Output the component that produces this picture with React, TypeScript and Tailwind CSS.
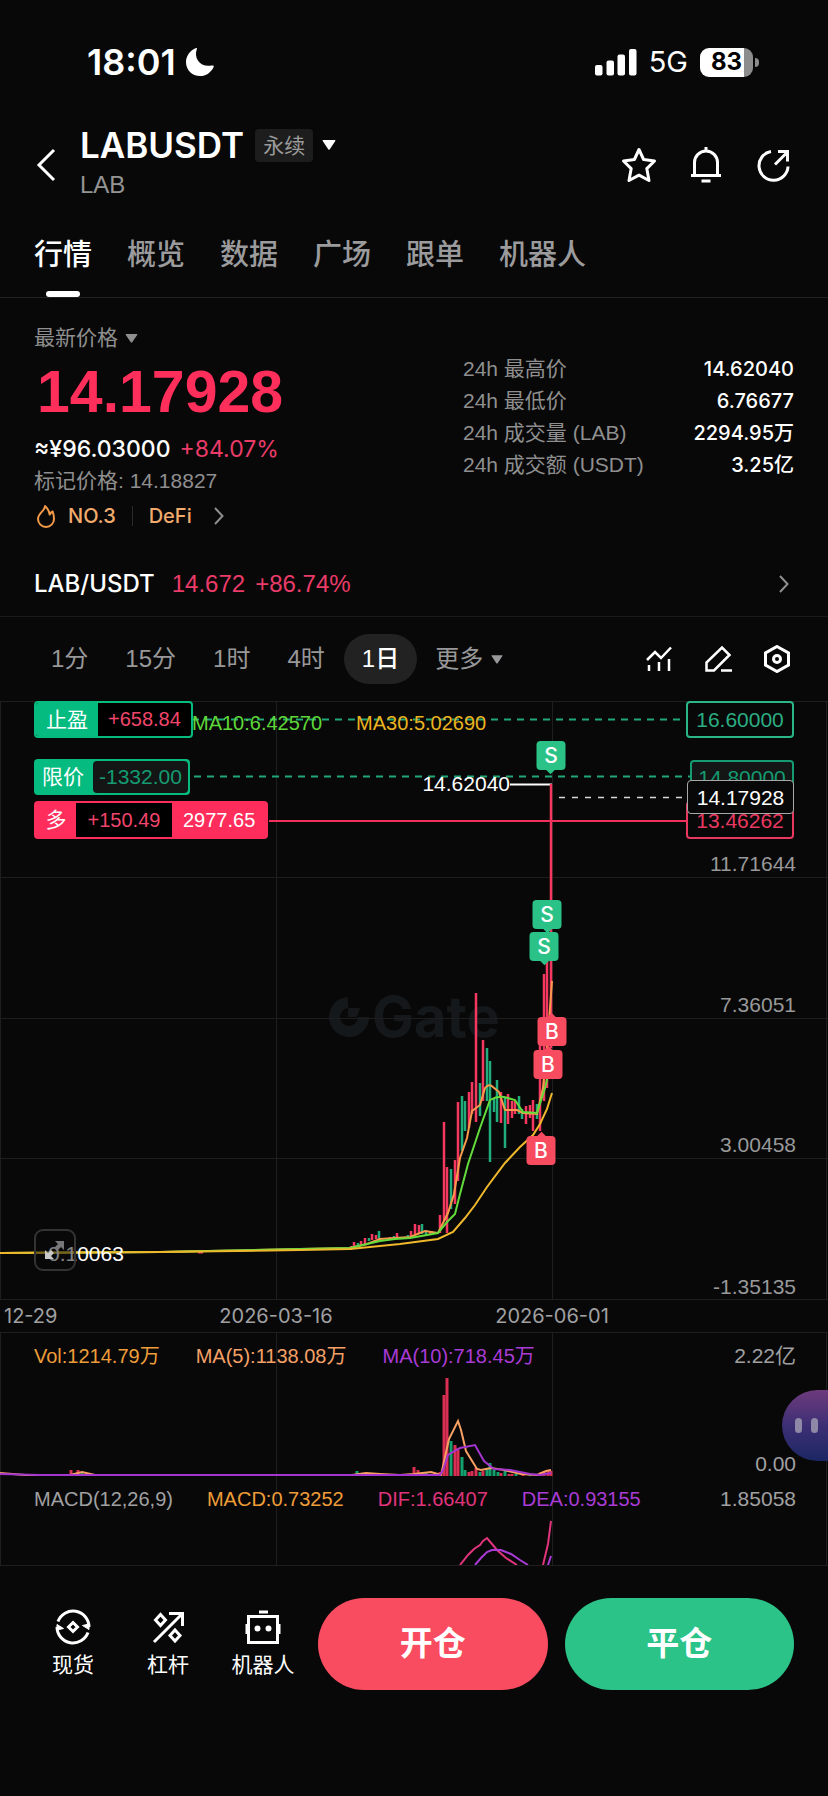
import { useState } from 'react'
import type { ReactNode } from 'react'
import clsx from 'clsx'

type Side = 'buy' | 'sell'

// [x, top, bottom, direction]
type Candle = [number, number, number, 'up' | 'down']

const RED = '#f5385f'
const GREEN = '#1fae7b'

const TABS = ['行情', '概览', '数据', '广场', '跟单', '机器人']
const INTERVALS = ['1分', '15分', '1时', '4时', '1日']

const STATS = [
  { label: '24h 最高价', value: '14.62040' },
  { label: '24h 最低价', value: '6.76677' },
  { label: '24h 成交量 (LAB)', value: '2294.95万' },
  { label: '24h 成交额 (USDT)', value: '3.25亿' },
]

const CANDLES: Candle[] = [
  [351, 545, 549, 'up'],
  [354, 541, 547, 'up'],
  [358, 542, 546, 'down'],
  [361, 540, 544, 'up'],
  [365, 537, 543, 'up'],
  [369, 537, 540, 'down'],
  [372, 533, 539, 'up'],
  [376, 534, 538, 'up'],
  [379, 530, 539, 'down'],
  [390, 536, 539, 'up'],
  [394, 535, 538, 'down'],
  [397, 532, 538, 'up'],
  [408, 534, 538, 'down'],
  [411, 530, 536, 'up'],
  [415, 523, 533, 'up'],
  [419, 524, 533, 'up'],
  [422, 523, 533, 'down'],
  [426, 529, 535, 'down'],
  [430, 531, 534, 'up'],
  [433, 531, 533, 'down'],
  [440, 514, 532, 'up'],
  [444, 421, 520, 'up'],
  [447, 466, 532, 'up'],
  [451, 468, 508, 'down'],
  [455, 459, 503, 'up'],
  [458, 401, 480, 'up'],
  [462, 395, 450, 'down'],
  [465, 400, 430, 'down'],
  [469, 391, 427, 'up'],
  [472, 381, 413, 'up'],
  [476, 292, 421, 'up'],
  [480, 382, 415, 'down'],
  [483, 339, 400, 'up'],
  [487, 347, 400, 'down'],
  [490, 360, 461, 'down'],
  [494, 397, 411, 'down'],
  [497, 379, 421, 'down'],
  [501, 391, 422, 'up'],
  [505, 397, 447, 'down'],
  [508, 393, 423, 'up'],
  [512, 400, 417, 'up'],
  [515, 400, 413, 'up'],
  [519, 395, 413, 'down'],
  [522, 408, 418, 'down'],
  [526, 405, 423, 'up'],
  [530, 404, 417, 'up'],
  [533, 399, 430, 'up'],
  [537, 403, 418, 'down'],
  [540, 343, 430, 'up'],
  [544, 273, 400, 'up'],
  [547, 260, 387, 'up'],
  [551, 83, 347, 'up'],
]

const VOLUME_BARS: Candle[] = [
  [71, 137, 143, 'up'],
  [78, 137, 143, 'up'],
  [82, 140, 143, 'down'],
  [88, 140, 143, 'up'],
  [357, 138, 143, 'down'],
  [361, 140, 143, 'up'],
  [372, 140, 143, 'up'],
  [414, 134, 143, 'up'],
  [418, 137, 143, 'up'],
  [422, 139, 143, 'down'],
  [426, 140, 143, 'down'],
  [440, 139, 143, 'up'],
  [444, 62, 143, 'up'],
  [447, 45, 143, 'up'],
  [451, 108, 143, 'down'],
  [455, 112, 143, 'up'],
  [458, 115, 143, 'up'],
  [462, 124, 143, 'down'],
  [465, 137, 143, 'down'],
  [469, 139, 143, 'up'],
  [472, 138, 143, 'up'],
  [476, 135, 143, 'up'],
  [480, 139, 143, 'down'],
  [483, 138, 143, 'up'],
  [487, 136, 143, 'down'],
  [490, 130, 143, 'down'],
  [494, 137, 143, 'down'],
  [498, 139, 143, 'down'],
  [501, 140, 143, 'up'],
  [505, 138, 143, 'down'],
  [509, 141, 143, 'up'],
  [512, 141, 143, 'up'],
  [516, 141, 143, 'down'],
  [523, 142, 143, 'up'],
  [530, 142, 143, 'down'],
  [537, 141, 143, 'up'],
  [541, 139, 143, 'up'],
  [544, 138, 143, 'up'],
  [548, 137, 143, 'up'],
  [551, 138, 143, 'up'],
]

const MARKERS: { side: Side; x: number; y: number }[] = [
  { side: 'sell', x: 551, y: 40 },
  { side: 'sell', x: 547, y: 199 },
  { side: 'sell', x: 544, y: 231 },
  { side: 'buy', x: 552, y: 316 },
  { side: 'buy', x: 548, y: 349 },
  { side: 'buy', x: 541, y: 435 },
]

function Caret({ className }: { className: string }) {
  return (
    <svg viewBox="0 0 14 10" className={className} fill="currentColor" aria-hidden="true">
      <path d="M1.2 0h11.6q1.2 0 .5 1L7.8 9.3q-.8 1-1.6 0L.7 1Q0 0 1.2 0Z" />
    </svg>
  )
}

function Chevron({ className }: { className: string }) {
  return (
    <svg viewBox="0 0 10 18" className={className} fill="none" stroke="currentColor" strokeWidth="2" aria-hidden="true">
      <path d="m1 1 7.5 8L1 17" />
    </svg>
  )
}

function StatusBar() {
  return (
    <div className="flex h-[124px] items-center justify-between pr-[69px] pl-[87px] font-['Inter',sans-serif]">
      <div className="flex items-center gap-[9px]">
        <span className="text-[36px] leading-10 font-semibold">18:01</span>
        <svg viewBox="0 0 30 30" className="h-[30px] w-[30px]" fill="currentColor" aria-hidden="true">
          <path d="M10.5 1.2c1.2-.5 1.7 0 1.3 1C8.6 11 15 20.5 26.5 18.6c2-.4 2.7.2 2 1.600C26 25.500 21 29 15 29 7 29 1 23 1 15 1 9 5 3.500 10.500 1.200Z" />
        </svg>
      </div>
      <div className="flex items-center">
        <svg viewBox="0 0 42 27" className="h-[27px] w-[42px]" fill="currentColor" aria-hidden="true">
          <rect x="0" y="16" width="7.500" height="10.500" rx="2" />
          <rect x="11.500" y="11.500" width="7.500" height="15" rx="2" />
          <rect x="22.500" y="5.500" width="7.500" height="21" rx="2" />
          <rect x="34" y="0" width="7.500" height="26.500" rx="2" />
        </svg>
        <span className="ml-[12px] text-[29px] leading-10">5G</span>
        <div className="ml-[12px] flex items-center gap-[2px]">
          <span className="flex h-[29px] w-[53px] items-center justify-center rounded-[9px] bg-linear-to-r from-white from-83% to-[#8c8c8c] to-83% text-[24px] leading-7 font-bold text-black">
            83
          </span>
          <span className="h-[9px] w-[4px] rounded-r-full bg-[#8c8c8c]" />
        </div>
      </div>
    </div>
  )
}

function IconButton({ label, children }: { label: string; children: ReactNode }) {
  return (
    <button type="button" aria-label={label} className="flex h-10 w-10 items-center justify-center">
      {children}
    </button>
  )
}

function PairHeader() {
  return (
    <header className="flex h-[82px] items-center pr-[35px] pl-[36px]">
      <button type="button" aria-label="返回" className="mr-[24px]">
        <svg viewBox="0 0 20 34" className="h-[34px] w-[20px]" fill="none" stroke="currentColor" strokeWidth="3" aria-hidden="true">
          <path d="M18 2 3 17l15 15" />
        </svg>
      </button>
      <div className="flex-1">
        <button type="button" className="flex items-center">
          <span className="font-['Inter',sans-serif] text-[35px] leading-10 font-semibold">LABUSDT</span>
          <span className="ml-[11px] rounded-[4px] bg-[#1d1d1d] px-[8px] text-[21px] leading-[33px] text-[#9a9a9a]">
            永续
          </span>
          <Caret className="ml-[9px] h-[10px] w-[14px]" />
        </button>
        <div className="text-[24px] leading-10 text-[#949494]">LAB</div>
      </div>
      <div className="flex gap-[27px]">
        <IconButton label="自选">
          <svg viewBox="0 0 36 36" className="h-9 w-9" fill="none" stroke="currentColor" strokeWidth="3" strokeLinejoin="round" aria-hidden="true">
            <path d="m18 2.500 4.600 10L33.500 14l-7.700 7.600L28 33.500l-10-5.300-10 5.300 2.200-11.900L2.500 14l10.900-1.500Z" />
          </svg>
        </IconButton>
        <IconButton label="提醒">
          <svg viewBox="0 0 36 36" className="h-9 w-9" fill="none" stroke="currentColor" strokeWidth="3" aria-hidden="true">
            <path d="M18 0v4M6.500 28.500V15.500a11.500 11.500 0 0 1 23 0v13M3 28.500h30M13.500 34h9" />
          </svg>
        </IconButton>
        <IconButton label="分享">
          <svg viewBox="0 0 36 36" className="h-9 w-9" fill="none" stroke="currentColor" strokeWidth="3" aria-hidden="true">
            <path d="M16 4.500A14.500 14.500 0 1 0 33 19.500M20 17.500 31.500 6M23 4.500h9.500v10" />
          </svg>
        </IconButton>
      </div>
    </header>
  )
}

function PageTabs() {
  const [active, setActive] = useState(0)

  return (
    <nav className="flex h-[92px] gap-[35px] border-b border-[#222] pl-[34px]">
      {TABS.map((tab, i) => (
        <button
          key={tab}
          type="button"
          onClick={() => setActive(i)}
          className={clsx(
            'flex flex-col items-center justify-between pt-[29px] text-[29px] leading-10 font-medium',
            i === active ? 'text-white' : 'text-[#9b9b9d]',
          )}
        >
          {tab}
          {i === active && <span className="h-[6px] w-[34px] rounded-[3px] bg-white" />}
        </button>
      ))}
    </nav>
  )
}

function Summary() {
  return (
    <section className="flex px-[34px] pt-[28px]">
      <div className="flex-1">
        <button type="button" className="flex items-center gap-[7px] text-[21px] leading-6 text-[#8f8f8f]">
          最新价格
          <Caret className="h-[9px] w-[13px]" />
        </button>
        <div className="mt-[12px] pl-[3px] text-[59px] leading-[60px] font-bold text-[#ff2e5b]">14.17928</div>
        <div className="mt-[11px] flex gap-[9px] font-['Inter',sans-serif] text-[23px] leading-8">
          <span className="font-medium">≈¥96.03000</span>
          <span className="text-[#ea3b69]">+84.07%</span>
        </div>
        <div className="text-[21px] leading-8 text-[#8f8f8f]">标记价格: 14.18827</div>
        <div className="mt-[3px] flex items-center font-['Inter',sans-serif] text-[20px] leading-8 font-medium text-[#f2ab6c]">
          <svg viewBox="0 0 24 24" className="h-[24px] w-[24px]" fill="none" stroke="#f39a48" strokeWidth="2" strokeLinejoin="round" aria-hidden="true">
            <path d="M11 2c.5 4.500-7 7-7 13a8 8 0 0 0 16 0c0-2.500-.5-5-1.300-7.500-1.300.5-2.300 1.500-3 3C15 7 13.500 4 11 2Z" />
          </svg>
          <a href="#rank" className="ml-[10px]">NO.3</a>
          <span className="mx-[16px] h-[20px] w-px bg-[#2a2a2a]" />
          <a href="#defi" className="flex items-center gap-[22px]">
            DeFi
            <Chevron className="h-[18px] w-[10px] text-[#8f8f8f]" />
          </a>
        </div>
      </div>
      <dl className="w-[331px] pt-[27px] text-[21px] leading-8">
        {STATS.map(stat => (
          <div key={stat.label} className="flex justify-between">
            <dt className="text-[#8f8f8f]">{stat.label}</dt>
            <dd className="font-['Inter','Noto_Sans_CJK_SC',sans-serif] text-[20px] font-medium">{stat.value}</dd>
          </div>
        ))}
      </dl>
    </section>
  )
}

function SpotRow() {
  return (
    <a href="#spot" className="mt-[19px] flex h-[66px] items-center border-b border-[#1a1a1a] pr-[39px] pl-[34px] text-[24px]">
      <span className="font-['Inter',sans-serif] font-medium">LAB/USDT</span>
      <span className="ml-[17px] text-[#ea3b69]">14.672</span>
      <span className="ml-[10px] flex-1 text-[#ea3b69]">+86.74%</span>
      <Chevron className="h-[18px] w-[10px] text-[#8f8f8f]" />
    </a>
  )
}

function IntervalBar() {
  const [active, setActive] = useState('1日')

  return (
    <div className="flex h-[84px] items-center justify-between pr-[37px] pl-[33px]">
      <div className="flex items-center gap-px text-[24px]">
        {INTERVALS.map(interval => (
          <button
            key={interval}
            type="button"
            onClick={() => setActive(interval)}
            className={clsx(
              'h-[50px] rounded-full px-[18px]',
              interval === active ? 'bg-[#222] font-medium text-white' : 'text-[#98989a]',
            )}
          >
            {interval}
          </button>
        ))}
        <button type="button" className="flex items-center gap-[8px] pl-[17px] text-[#98989a]">
          更多
          <Caret className="h-[9px] w-[12px]" />
        </button>
      </div>
      <div className="flex gap-[31px]">
        <button type="button" aria-label="指标">
          <svg viewBox="0 0 28 28" className="h-7 w-7" fill="none" stroke="currentColor" strokeWidth="2.500" aria-hidden="true">
            <path d="m2 15 8-8 6 6L26 2.500M4 26v-6M14 26v-9M24 26V14" />
          </svg>
        </button>
        <button type="button" aria-label="画线">
          <svg viewBox="0 0 28 28" className="h-7 w-7" fill="none" stroke="currentColor" strokeWidth="2.500" aria-hidden="true">
            <path d="M2.500 25.500v-8L18 2.500l7.500 7.500L10 25.500ZM17 25.500h11" />
          </svg>
        </button>
        <button type="button" aria-label="设置">
          <svg viewBox="0 0 28 28" className="h-7 w-7" fill="none" stroke="currentColor" strokeWidth="3" aria-hidden="true">
            <path d="M14 1.500 25.500 8v12L14 26.500 2.500 20V8Z" />
            <circle cx="14" cy="14" r="3.500" />
          </svg>
        </button>
      </div>
    </div>
  )
}

function Marker({ side, x, y }: { side: Side; x: number; y: number }) {
  const isSell = side === 'sell'

  return (
    <div className="absolute -translate-x-1/2" style={{ left: `${(x / 828) * 100}%`, top: y }}>
      <div
        className={clsx(
          "relative flex h-[29px] w-[29px] items-center justify-center rounded-[4px] font-['Inter',sans-serif] text-[21px] leading-none font-medium text-white",
          isSell ? 'bg-[#2bc287]' : 'bg-[#f74b60]',
        )}
      >
        {isSell ? 'S' : 'B'}
        <span
          className={clsx(
            'absolute left-1/2 h-[6px] w-[6px] -translate-x-1/2 rotate-45',
            isSell ? '-bottom-[3px] bg-[#2bc287]' : '-top-[3px] bg-[#f74b60]',
          )}
        />
      </div>
    </div>
  )
}

function PriceChart() {
  return (
    <div className="relative h-[598px] overflow-hidden text-[20px]">
      <div className="absolute top-[290px] left-[328px] flex items-center gap-[2px] text-[#15181b]">
        <svg viewBox="0 0 42 42" className="h-[42px] w-[42px]" aria-hidden="true">
          <path d="M20 6.500A14.500 14.500 0 1 0 35.500 21" fill="none" stroke="currentColor" strokeWidth="11" />
          <path d="M20 12h12l-3 9h-9Z" fill="currentColor" />
        </svg>
        <span className="font-['Inter',sans-serif] text-[56px] leading-[52px] font-bold">Gate</span>
      </div>

      <svg viewBox="0 0 828 598" preserveAspectRatio="none" className="absolute h-full w-full" fill="none" aria-hidden="true">
        <path d="M0 .5H828M0 176.500H828M0 317.500H828M0 457.500H828M.5 0V598M276.500 0V598M552.500 0V598M826.500 0V598" stroke="#1e1e1e" />
        <path d="M510 83.500H552" stroke="#fff" strokeWidth="2" />
        {CANDLES.map(([x, top, bottom, dir]) => (
          <path key={x} d={`M${x} ${top}V${bottom}`} stroke={dir === 'up' ? RED : GREEN} strokeWidth="2.500" />
        ))}
        <path d="M198 551h5" stroke={RED} strokeWidth="3" />
        <path
          d="M0 552 160 551 300 548 350 547 367 543 380 538 395 537 410 536 425 530 438 532 448 512 454 493 460 457 467 437 472 410 480 404 485 387Q489 382 493 386L499 391 505 409H517L523 412 537 413 543 387 547 347 552 280"
          stroke="#f89a4c"
          strokeWidth="2"
        />
        <path
          d="M0 552 160 551 300 548 350 547 380 540 395 538 410 537 438 532 447 521 455 513 460 493 468 463 480 427 490 399Q497 395 504 396L515 399 523 411 537 412 545 387 549 370 552 350"
          stroke="#63dc3c"
          strokeWidth="2"
        />
        <path
          d="M0 552 160 551 300 549 350 548 400 543 438 538 453 531 465 517 475 504 487 486 505 462 520 446 533 434 540 423 547 408 552 392"
          stroke="#efb82c"
          strokeWidth="2"
        />
        <path d="M192 18.500H686" stroke="#22a878" strokeWidth="2" strokeDasharray="7 6" />
        <path d="M194 75.500H690" stroke="#22a878" strokeWidth="2" strokeDasharray="7 6" />
        <path d="M559 96.500H688" stroke="#d8d8d8" strokeWidth="1.500" strokeDasharray="6 7" />
        <path d="M269 120H686" stroke="#f2305c" strokeWidth="2" />
      </svg>

      <div className="absolute top-[10px] left-[192px] flex gap-[34px] leading-6">
        <span className="text-[#5fd739]">MA10:6.42570</span>
        <span className="text-[#ebb320]">MA30:5.02690</span>
      </div>

      <span className="absolute top-[71px] right-[318px] text-[21px] leading-6">14.62040</span>
      <span className="absolute top-[541px] left-[48px] text-[21px] leading-6">0.10063</span>

      <div className="absolute top-[151px] right-[32px] text-[21px] leading-6 text-[#98989a]">11.71644</div>
      <div className="absolute top-[292px] right-[32px] text-[21px] leading-6 text-[#98989a]">7.36051</div>
      <div className="absolute top-[432px] right-[32px] text-[21px] leading-6 text-[#98989a]">3.00458</div>
      <div className="absolute top-[574px] right-[32px] text-[21px] leading-6 text-[#98989a]">-1.35135</div>

      {MARKERS.map(marker => (
        <Marker key={marker.y} {...marker} />
      ))}

      {/* Open orders */}
      <button type="button" className="absolute top-0 left-[34px] flex h-[37px] overflow-hidden rounded-[4px] border-2 border-[#05bb7f] bg-black leading-[33px]">
        <span className="bg-[#05bb7f] px-[10px] text-[21px]">止盈</span>
        <span className="px-[10px] text-[#f2456b]">+658.84</span>
      </button>
      <button type="button" className="absolute top-[58px] left-[34px] flex h-[36px] rounded-[4px] bg-[#05bb7f] p-[2px] leading-8">
        <span className="px-[6px] text-[21px]">限价</span>
        <span className="ml-[3px] rounded-[4px] bg-[#131615] px-[6px] text-[21px] text-[#159b71]">-1332.00</span>
      </button>
      <button type="button" className="absolute top-[100px] left-[34px] flex h-[38px] rounded-[4px] bg-[#ff2d5c] p-[2px] leading-[34px]">
        <span className="w-[40px] text-[21px]">多</span>
        <span className="w-[96px] bg-black text-[#f2456b]">+150.49</span>
        <span className="px-[11px]">2977.65</span>
      </button>

      <div className="absolute top-0 right-[34px] h-[37px] w-[108px] rounded-[4px] border-2 border-[#2bb688] bg-[#080808] text-center text-[21px] leading-[34px] text-[#2bae82]">
        16.60000
      </div>
      <div className="absolute top-[100px] right-[34px] h-[38px] w-[108px] rounded-[4px] border-2 border-[#e83860] bg-[#080808] text-center text-[21px] leading-[36px] text-[#e83860]">
        13.46262
      </div>
      <div className="absolute top-[59px] right-[34px] h-[36px] w-[104px] rounded-[4px] border-2 border-[#159b71] bg-[#131615] text-center text-[21px] leading-[32px] text-[#159b71]">
        14.80000
      </div>
      <div className="absolute top-[79px] right-[34px] h-[34px] w-[107px] rounded-[4px] border border-[#a8a8a8] bg-[#080808] text-center text-[21px] leading-[34px]">
        14.17928
      </div>

      <button type="button" aria-label="全屏" className="absolute top-[528px] left-[34px] flex h-[42px] w-[42px] items-center justify-center rounded-[9px] border-2 border-[#333] bg-[#080808]/50">
        <svg viewBox="0 0 22 22" className="h-[22px] w-[22px]" aria-hidden="true">
          <path d="M11 2h9v9l-3-3-4 4-3-3 4-4Z" fill="#77777a" />
          <path d="M1 11v9h9l-3-3 3-3-3-3-3 3Z" fill="#c9c9c9" />
        </svg>
      </button>
    </div>
  )
}

function DateAxis() {
  return (
    <div className="relative h-[34px] border-y border-[#1e1e1e] font-['Inter',sans-serif] text-[20px] leading-8 text-[#a0a0a2]">
      <span className="absolute left-[4px]">12-29</span>
      <span className="absolute left-1/3 -translate-x-1/2">2026-03-16</span>
      <span className="absolute left-2/3 -translate-x-1/2">2026-06-01</span>
    </div>
  )
}

function VolumeChart() {
  return (
    <div className="relative h-[143px] text-[20px] leading-6">
      <svg viewBox="0 0 828 143" preserveAspectRatio="none" className="absolute h-full w-full" fill="none" aria-hidden="true">
        <path d="M.5 0V143M276.500 0V143M552.500 0V143M826.500 0V143" stroke="#1e1e1e" />
        {VOLUME_BARS.map(([x, top, bottom, dir]) => (
          <path key={x} d={`M${x} ${top}V${bottom}`} stroke={dir === 'up' ? '#d92f52' : '#12a06d'} strokeWidth="3" />
        ))}
        <path
          d="M0 140 25 142H70L82 139 95 142H352L366 140 380 141 400 142 414 141 431 139 441 142 449 106 458 88 461 97 466 118 477 136 481 137 491 135 504 137 521 141 537 142 546 138 551 137"
          stroke="#f9a063"
          strokeWidth="2"
        />
        <path
          d="M0 141 40 142H440L443 137 448 122 460 115 475 112 484 128 494 136 510 137 530 141 540 142 551 140"
          stroke="#a436cf"
          strokeWidth="2"
        />
      </svg>
      <div className="relative flex justify-between pt-[11px] pr-[32px] pl-[34px]">
        <div className="flex gap-[36px]">
          <span className="text-[#ee9d38]">Vol:1214.79万</span>
          <span className="text-[#f5a066]">MA(5):1138.08万</span>
          <span className="text-[#a93bd6]">MA(10):718.45万</span>
        </div>
        <span className="text-[21px] text-[#a0a0a2]">2.22亿</span>
      </div>
      <span className="absolute right-[32px] bottom-0 text-[21px] text-[#a0a0a2]">0.00</span>
      <button
        type="button"
        aria-label="助手"
        className="absolute top-[57px] right-0 flex h-[71px] w-[46px] items-center gap-[9px] rounded-l-full bg-linear-to-b from-[#6d3a7c] via-[#3d2f75] to-[#1b2763] pl-[13px]"
      >
        <span className="h-[15px] w-[7px] rounded-full bg-[#8f88a6]" />
        <span className="h-[15px] w-[7px] rounded-full bg-[#8f88a6]" />
      </button>
    </div>
  )
}

function MacdChart() {
  return (
    <div className="relative h-[90px] border-b border-[#1e1e1e] text-[20px] leading-6">
      <svg viewBox="0 0 828 89" preserveAspectRatio="none" className="absolute h-full w-full" fill="none" aria-hidden="true">
        <path d="M.5 0V89M276.500 0V89M552.500 0V89M826.500 0V89" stroke="#1e1e1e" />
        <path d="M460 89 468 79 474 73 480 69 483 65 487 62 492 68 497 74 506 82 517 89M543 89 548 68 551 45" stroke="#e0347c" strokeWidth="2" />
        <path d="M475 89 481 82 487 76 492 74H501L511 78 520 84 528 89M548 89 551 80" stroke="#a93bd6" strokeWidth="2" />
      </svg>
      <div className="relative flex justify-between pt-[11px] pr-[32px] pl-[34px]">
        <div className="flex gap-[34px]">
          <span className="text-[#a0a0a2]">MACD(12,26,9)</span>
          <span className="text-[#ee9d38]">MACD:0.73252</span>
          <span className="text-[#e0347c]">DIF:1.66407</span>
          <span className="text-[#a93bd6]">DEA:0.93155</span>
        </div>
        <span className="text-[21px] text-[#a0a0a2]">1.85058</span>
      </div>
    </div>
  )
}

function NavItem({ label, children }: { label: string; children: ReactNode }) {
  return (
    <a href="#nav" className="flex w-16 flex-col items-center gap-[6px] text-[21px] leading-7">
      <svg viewBox="0 0 36 36" className="h-9 w-9" fill="none" stroke="currentColor" strokeWidth="3" aria-hidden="true">
        {children}
      </svg>
      {label}
    </a>
  )
}

function ActionBar() {
  return (
    <footer className="flex items-center gap-[17px] px-[34px] pt-[32px] pb-[106px]">
      <div className="flex gap-[31px] pr-[6px] pl-[7px]">
        <NavItem label="现货">
          <path d="M3 12.500A16 16 0 0 1 34 18M33 23.500A16 16 0 0 1 2 18" />
          <path d="M27.500 16.500 34 20.500V15ZM8.500 19.500 2 15.500V21Z" fill="currentColor" strokeWidth="1" />
          <path d="m18 13.500 4.500 4.500-4.500 4.500-4.500-4.500Z" />
        </NavItem>
        <NavItem label="杠杆">
          <path d="M4 33 31.500 5.500M19 4.500h13.500V17M10.500 5.500l5 5.500-5 5.500-5-5.500ZM25 21l5 5.500-5 5.500-5-5.500Z" />
        </NavItem>
        <NavItem label="机器人">
          <path d="M3.500 7.500h29v26h-29ZM14 3h9M2 15v10M34 15v10" />
          <circle cx="12.500" cy="19.500" r="2" fill="currentColor" strokeWidth="2" />
          <circle cx="23.500" cy="19.500" r="2" fill="currentColor" strokeWidth="2" />
        </NavItem>
      </div>
      <button type="button" className="h-[92px] flex-1 rounded-full bg-[#f94c60] text-[33px] font-bold">开仓</button>
      <button type="button" className="h-[92px] flex-1 rounded-full bg-[#2bc388] text-[33px] font-bold">平仓</button>
    </footer>
  )
}

export default function App() {
  return (
    <main className="min-h-screen bg-[#080808] font-['Liberation_Sans','Noto_Sans_CJK_SC',sans-serif] text-white">
      <StatusBar />
      <PairHeader />
      <PageTabs />
      <Summary />
      <SpotRow />
      <IntervalBar />
      <PriceChart />
      <DateAxis />
      <VolumeChart />
      <MacdChart />
      <ActionBar />
    </main>
  )
}
